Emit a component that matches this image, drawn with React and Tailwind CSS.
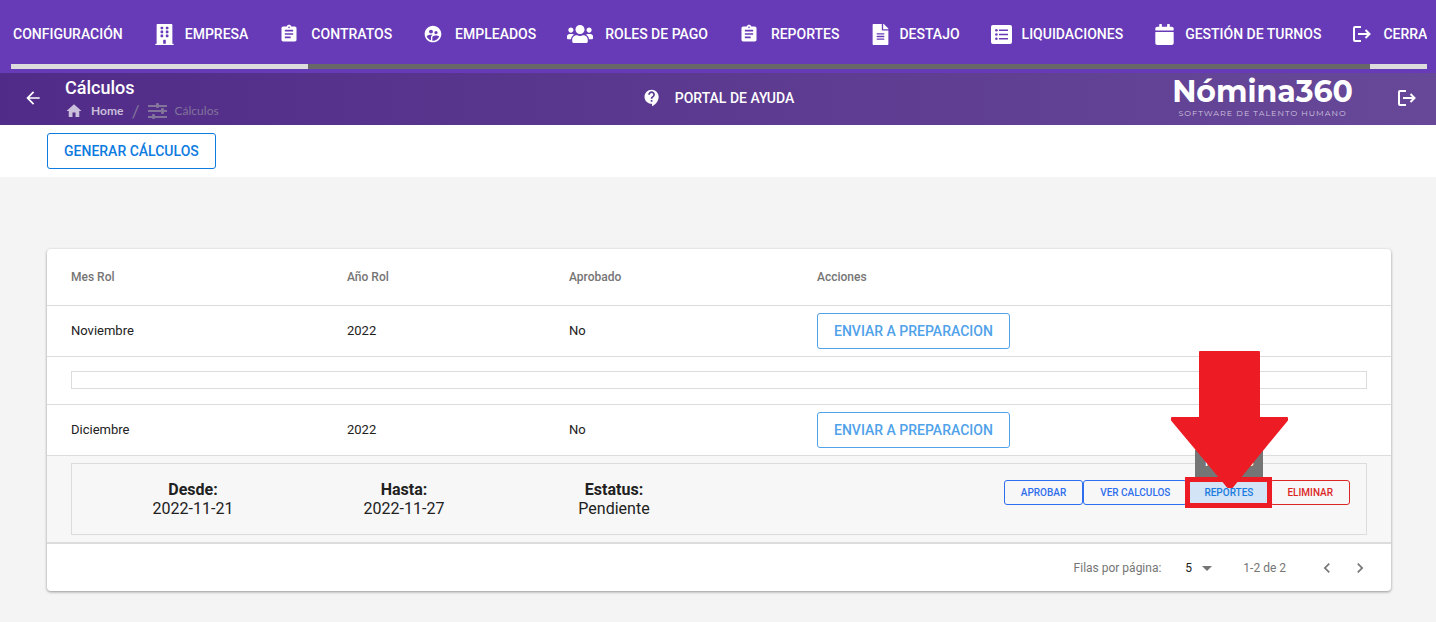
import { FaBuilding, FaCalendar, FaFileAlt, FaUsers } from "react-icons/fa";
import {
  MdArrowBack,
  MdArrowDropDown,
  MdAssignment,
  MdChevronLeft,
  MdChevronRight,
  MdContactSupport,
  MdHome,
  MdSupervisedUserCircle,
} from "react-icons/md";

const ExitIcon = () => (
  <svg width="19" height="18" viewBox="0 0 19 18" fill="none" stroke="currentColor" strokeWidth="2">
    <path d="M9 2H3a1 1 0 0 0-1 1v12a1 1 0 0 0 1 1h6" strokeLinecap="butt" />
    <path d="M6 9h11M13.5 5l4 4-4 4" />
  </svg>
);

const ListIcon = () => (
  <svg width="21" height="19" viewBox="0 0 21 19">
    <rect width="21" height="19" rx="2" fill="currentColor" />
    <g className="stroke-[#673ab7]" strokeWidth="1.5">
      <path d="M8 5.2h9M8 9.5h9M8 13.8h9" />
    </g>
    <g className="fill-[#673ab7]">
      <circle cx="5.4" cy="5.2" r="1.3" />
      <circle cx="5.4" cy="9.5" r="1.3" />
      <circle cx="5.4" cy="13.8" r="1.3" />
    </g>
  </svg>
);

const SlidersIcon = () => (
  <svg width="19" height="16" viewBox="0 0 19 16" fill="currentColor">
    <path d="M0 2h19v2H0zM0 7h19v2H0zM0 13h19v2H0z" />
    <rect x="8" y="0" width="3" height="5" rx="1" />
    <rect x="13" y="5" width="3" height="6" rx="1" />
    <rect x="4" y="11" width="3" height="5" rx="1" />
  </svg>
);

const menuItems = [
  { label: "EMPRESA", icon: <FaBuilding size={21} />, gap: "gap-[10px]" },
  { label: "CONTRATOS", icon: <MdAssignment size={20} />, gap: "gap-3" },
  { label: "EMPLEADOS", icon: <MdSupervisedUserCircle size={20} />, gap: "gap-3" },
  { label: "ROLES DE PAGO", icon: <FaUsers size={26} />, gap: "gap-3" },
  { label: "REPORTES", icon: <MdAssignment size={20} />, gap: "gap-3" },
  { label: "DESTAJO", icon: <FaFileAlt size={21} />, gap: "gap-2" },
  { label: "LIQUIDACIONES", icon: <ListIcon />, gap: "gap-[10px]" },
  { label: "GESTIÓN DE TURNOS", icon: <FaCalendar size={21} />, gap: "gap-[10px]" },
  { label: "CERRAR SESIÓN", icon: <ExitIcon />, gap: "gap-3" },
];

const rows = [
  { month: "Noviembre", year: "2022", approved: "No", periods: [] },
  {
    month: "Diciembre",
    year: "2022",
    approved: "No",
    periods: [{ from: "2022-11-21", to: "2022-11-27", status: "Pendiente" }],
  },
];

const TopMenu = () => (
  <nav className="bg-[#673ab7] pl-[11px] pr-[9px] h-[73px]">
    <div className="overflow-hidden h-16 pt-1">
      <div className="flex items-center h-[60px] gap-[31px] px-[2px] w-max text-sm font-medium text-white">
        <button className="font-medium">CONFIGURACIÓN</button>
        {menuItems.map((item) => (
          <button key={item.label} className={`flex items-center font-medium ${item.gap}`}>
            {item.icon}
            <span>{item.label}</span>
          </button>
        ))}
      </div>
    </div>
    {/* scrollbar */}
    <div className="flex h-[5px] bg-[#dcdcdc]">
      <div className="w-[21%]" />
      <div className="w-[75%] bg-[#686868]" />
    </div>
  </nav>
);

const Header = () => (
  <header className="grid grid-cols-[1fr_auto_1fr] items-center h-[52px] pb-[2px] text-white bg-linear-to-r from-[#512b88] to-[#674898]">
    <div className="flex items-center pl-[23px] gap-[22px]">
      <button aria-label="Volver">
        <MdArrowBack size={20} />
      </button>
      <div>
        <h1 className="text-lg leading-[26px] font-medium">Cálculos</h1>
        <div className="flex items-center h-5 text-xs text-white/70 font-[Lato,sans-serif]">
          <MdHome size={18} />
          <a href="#home" className="ml-2 font-bold">
            Home
          </a>
          <span className="mx-2 text-lg text-[#82749a]">/</span>
          <span className="flex items-center gap-2 text-[#82749a]">
            <SlidersIcon />
            Cálculos
          </span>
        </div>
      </div>
    </div>
    <button className="flex items-center gap-[13px] text-sm font-medium">
      <MdContactSupport size={20} />
      PORTAL DE AYUDA
    </button>
    <div className="flex items-center justify-end pr-5 gap-11">
      <div className="text-center font-[Montserrat,Inter,sans-serif]">
        <div className="text-[30px] leading-[30px] font-bold">Nómina360</div>
        <div className="text-[8px] leading-3 text-white/70 tracking-[1px]">
          SOFTWARE DE TALENTO HUMANO
        </div>
      </div>
      <button aria-label="Salir">
        <ExitIcon />
      </button>
    </div>
  </header>
);

const smallButton = "h-[25px] px-4 border rounded-[3px] text-[10px] font-medium";

const Period = ({ period }) => (
  <div className="flex items-start border border-[#dcdcdc] h-[72px] pt-4 pr-4">
    <dl className="flex text-base leading-[19px] text-center text-[#212121]">
      <div className="w-[242px]">
        <dt className="font-bold">Desde:</dt>
        <dd>{period.from}</dd>
      </div>
      <div className="w-[180px]">
        <dt className="font-bold">Hasta:</dt>
        <dd>{period.to}</dd>
      </div>
      <div className="w-[240px]">
        <dt className="font-bold">Estatus:</dt>
        <dd>{period.status}</dd>
      </div>
    </dl>
    <div className="flex ml-auto">
      <button className={`${smallButton} border-[#2f6fed] text-[#2f6fed]`}>APROBAR</button>
      <button className={`${smallButton} border-[#2f6fed] text-[#2f6fed]`}>VER CALCULOS</button>
      <div className="relative">
        <button className={`${smallButton} w-[83px] border-[#1a7ce0] bg-[#d2e4f5] text-[#1a7ce0]`}>
          REPORTES
        </button>
        <span className="absolute left-2 bottom-6 w-[68px] h-[31px] pt-1 bg-[#757575] text-white text-xs text-center font-medium">
          Reportes
        </span>
        <div className="absolute -left-[2px] -top-[3px] w-[87px] h-[31px] border-5 border-[#ed1c24]" />
        <svg
          className="absolute -left-4 bottom-4 max-w-none"
          width="118"
          height="138"
          viewBox="0 0 118 138"
          fill="#ed1c24"
          stroke="#ed1c24"
          strokeWidth="2"
          strokeLinejoin="round"
        >
          <path d="M29 1h59v66h28v2L61 136h-4L1 69v-2h28z" />
        </svg>
      </div>
      <button className={`${smallButton} border-[#dc2626] text-[#dc2626]`}>ELIMINAR</button>
    </div>
  </div>
);

const RolesTable = () => (
  <table className="w-full table-fixed text-left text-[13px] text-[#212121]">
    <colgroup>
      <col className="w-[296px]" />
      <col className="w-[226px]" />
      <col className="w-[244px]" />
      <col />
    </colgroup>
    <thead>
      <tr className="h-14 border-b border-[#dcdcdc] text-xs text-[#757575]">
        <th className="pl-6 font-medium">Mes Rol</th>
        <th className="pl-1 font-medium">Año Rol</th>
        <th className="font-medium">Aprobado</th>
        <th className="pl-1 font-medium">Acciones</th>
      </tr>
    </thead>
    {rows.map((row) => (
      <tbody key={row.month}>
        <tr className="h-[51px] border-b border-[#dcdcdc]">
          <td className="pl-6">{row.month}</td>
          <td className="pl-1">{row.year}</td>
          <td>{row.approved}</td>
          <td className="pl-1">
            <button className="h-9 px-4 border border-[#50a2ea] rounded-[3px] text-sm font-medium text-[#50a2ea]">
              ENVIAR A PREPARACION
            </button>
          </td>
        </tr>
        {row.periods.length === 0 ? (
          <tr className="h-12 border-b border-[#dcdcdc]">
            <td colSpan={4} className="px-6">
              <div className="h-[18px] border border-[#dcdcdc]" />
            </td>
          </tr>
        ) : (
          <tr className="h-[88px] border-b-2 border-[#dcdcdc] bg-[#f7f7f7]">
            <td colSpan={4} className="px-6">
              {row.periods.map((period) => (
                <Period key={period.from} period={period} />
              ))}
            </td>
          </tr>
        )}
      </tbody>
    ))}
  </table>
);

const Pagination = () => (
  <div className="flex items-center justify-end h-[47px] pr-[21px] text-xs text-[#757575]">
    <label htmlFor="page-size">Filas por página:</label>
    <div className="relative ml-6 mr-[26px]">
      <select id="page-size" className="block appearance-none w-8 text-[#212121]">
        <option>5</option>
      </select>
      <MdArrowDropDown
        size={24}
        className="absolute -right-0.5 -inset-y-1 my-auto pointer-events-none"
      />
    </div>
    <span>1-2 de 2</span>
    <button className="ml-[31px]" aria-label="Anterior">
      <MdChevronLeft size={20} />
    </button>
    <button className="ml-[13px]" aria-label="Siguiente">
      <MdChevronRight size={20} />
    </button>
  </div>
);

const App = () => {
  return (
    <div className="min-h-screen bg-[#f4f4f4] font-[Roboto,sans-serif]">
      <TopMenu />
      <Header />
      <div className="bg-white h-[52px] pl-[47px] pt-2">
        <button className="h-9 px-4 border border-[#0d7be0] rounded-[3px] text-sm font-medium text-[#0d7be0]">
          GENERAR CÁLCULOS
        </button>
      </div>
      <main className="pl-[47px] pr-[45px] pt-[72px] pb-[30px]">
        <div className="bg-white rounded shadow-[0_1px_3px_rgba(0,0,0,0.4)]">
          <RolesTable />
          <Pagination />
        </div>
      </main>
    </div>
  );
};

export default App;
